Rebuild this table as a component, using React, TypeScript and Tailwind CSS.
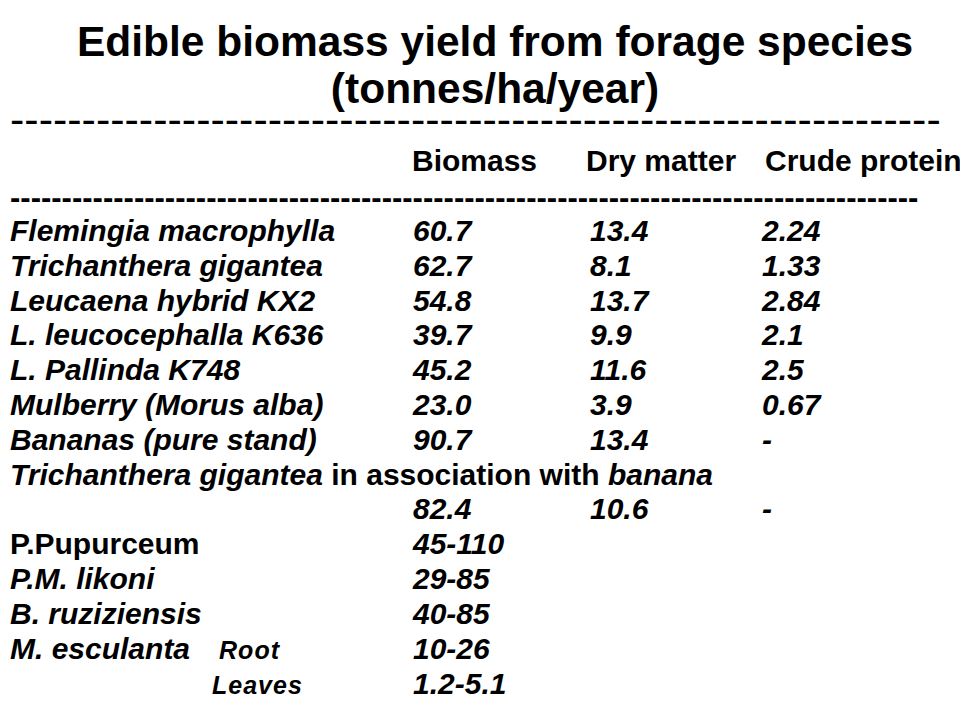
import React from 'react';

type Row = {
  name: React.ReactNode;
  biomass?: string;
  dry?: string;
  crude?: string;
};

const rows: Row[] = [
  { name: <i>Flemingia macrophylla</i>, biomass: '60.7', dry: '13.4', crude: '2.24' },
  { name: <i>Trichanthera gigantea</i>, biomass: '62.7', dry: '8.1', crude: '1.33' },
  { name: <i>Leucaena hybrid KX2</i>, biomass: '54.8', dry: '13.7', crude: '2.84' },
  { name: <i>L. leucocephalla K636</i>, biomass: '39.7', dry: '9.9', crude: '2.1' },
  { name: <i>L. Pallinda K748</i>, biomass: '45.2', dry: '11.6', crude: '2.5' },
  { name: <i>Mulberry (Morus alba)</i>, biomass: '23.0', dry: '3.9', crude: '0.67' },
  { name: <i>Bananas (pure stand)</i>, biomass: '90.7', dry: '13.4', crude: '-' },
];

const rangeRows: Row[] = [
  { name: 'P.Pupurceum', biomass: '45-110' },
  { name: <i>P.M. likoni</i>, biomass: '29-85' },
  { name: <i>B. ruziziensis</i>, biomass: '40-85' },
  {
    name: (
      <>
        <i>M. esculanta</i>
        <i className="ml-[29px] text-[25px] tracking-[1px]">Root</i>
      </>
    ),
    biomass: '10-26',
  },
  {
    name: <i className="pl-[202px] text-[25px] tracking-[1px]">Leaves</i>,
    biomass: '1.2-5.1',
  },
];

const DataRow = ({ row }: { row: Row }) => (
  <div className="grid grid-cols-[403px_177px_172px_1fr] whitespace-nowrap">
    <div>{row.name}</div>
    <i>{row.biomass}</i>
    <i>{row.dry}</i>
    <i>{row.crude}</i>
  </div>
);

export default function App() {
  return (
    <div className="w-[960px] h-[720px] overflow-hidden bg-white text-black font-bold font-['Liberation_Sans',Arial,sans-serif]">
      <h1 className="pt-[18px] pl-[30px] text-center text-[42.5px] leading-[47px] font-bold">
        Edible biomass yield from forage species
        <br />
        (tonnes/ha/year)
      </h1>

      <div className="mt-[-5px] h-[24px] pl-[10px] text-[43px] leading-[24px] font-normal whitespace-nowrap">
        {'-'.repeat(65)}
      </div>

      <div className="mt-[12px] pl-[10px] grid grid-cols-[402px_174px_179px_1fr] text-[30px] leading-[35px] whitespace-nowrap overflow-hidden">
        <span />
        <span>Biomass</span>
        <span>Dry matter</span>
        <span>Crude protein</span>
      </div>

      <div className="mt-[8px] h-[24px] pl-[10px] text-[31px] leading-[24px] whitespace-nowrap">
        {'-'.repeat(88)}
      </div>

      <div className="mt-[4px] pl-[10px] text-[30px] leading-[34.8px]">
        {rows.map((r, i) => (
          <DataRow key={i} row={r} />
        ))}
        <div className="whitespace-nowrap">
          <i>Trichanthera gigantea</i> in association with <i>banana</i>
        </div>
        <DataRow row={{ name: '', biomass: '82.4', dry: '10.6', crude: '-' }} />
        {rangeRows.map((r, i) => (
          <DataRow key={i} row={r} />
        ))}
      </div>
    </div>
  );
}
